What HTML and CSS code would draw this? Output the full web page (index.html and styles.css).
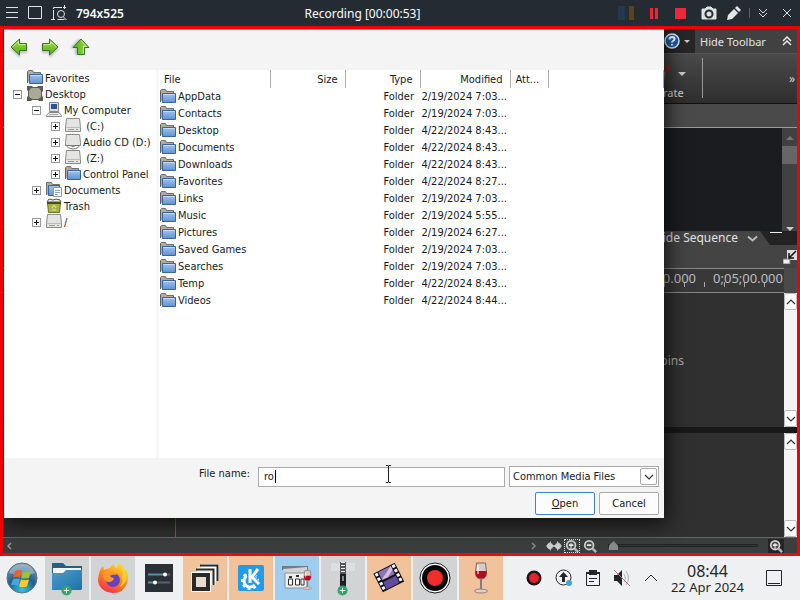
FILE: index.html
```
<!DOCTYPE html>
<html lang="en">
<head>
<meta charset="utf-8">
<title>Recording</title>
<link rel="stylesheet" href="styles.css">
</head>
<body>
<svg class="defs" aria-hidden="true">
  <defs>
    <linearGradient id="blue" x1="0" y1="0" x2="0" y2="1"><stop offset="0" stop-color="#a4c4ec"/><stop offset="1" stop-color="#5f92d2"/></linearGradient>
    <linearGradient id="green" x1="0" y1="0" x2="0" y2="1"><stop offset="0" stop-color="#a6de4c"/><stop offset="1" stop-color="#4fae14"/></linearGradient>
    <linearGradient id="teal" x1="0" y1="0" x2="1" y2="1"><stop offset="0" stop-color="#4f9dca"/><stop offset="1" stop-color="#1c72a8"/></linearGradient>
    <radialGradient id="orb" cx=".5" cy=".9" r=".9"><stop offset="0" stop-color="#35c0e8"/><stop offset=".5" stop-color="#20608e"/><stop offset="1" stop-color="#7d98ae"/></radialGradient>
    <linearGradient id="fire" x1=".8" y1="0" x2=".3" y2="1"><stop offset="0" stop-color="#ffe030"/><stop offset=".5" stop-color="#ff8a1c"/><stop offset="1" stop-color="#f0304c"/></linearGradient>
  </defs>
  <symbol id="folder" viewBox="0 0 16 16"><path d="M.5 12.500V1.500l1-1h4l1 2h7V5" fill="#b3ac9c" stroke="#6d6f70"/><path d="M.5 13V2" stroke="#595f68"/><path d="M2.500 4.500h13v9h-13z" fill="url(#blue)" stroke="#37639f"/><path d="M3.500 5.500h11" stroke="#c6dcf6"/></symbol>
  <symbol id="drive" viewBox="0 0 16 16"><path d="M1.500.5h13l1 9v4H.5v-4z" fill="#e4e4e2" stroke="#8b8b89"/><path d="M1 9.500h14" stroke="#bbb"/><path d="M3 11.500h6M11 11.500h2" stroke="#999"/></symbol>
  <symbol id="disc" viewBox="0 0 16 16"><path d="M1.500.5h13l1 8v3H.5v-3z" fill="#e4e4e2" stroke="#8b8b89"/><path d="M1.500 11.500h13q-1 3-6.500 3.500-5.500-.5-6.500-3.500z" fill="#fff" stroke="#777"/><path d="M6 11.500q2 3 4 0" fill="#aaa" stroke="#777"/></symbol>
  <symbol id="desk" viewBox="0 0 16 16"><path d="M0 0h5l1 1h4l1-1h5v5l-1 1v4l1 1v4h-4l-1-1H5l-1 1H0v-4l1-1V5L0 4z" fill="#5a5a57"/><path d="M4 2h8l2 3v6l-3 2H5l-3-2V5z" fill="#a9aa94"/></symbol>
  <symbol id="pc" viewBox="0 0 16 16"><path d="M3.500.5h9v9h-9z" fill="#ddd" stroke="#888"/><path d="M5 2h6v5H5z" fill="#29549a"/><path d="M3 10.500h10l2.500 3v1H.5v-1z" fill="#ececec" stroke="#888"/><path d="M3 12.500h9" stroke="#aaa"/></symbol>
  <symbol id="docs" viewBox="0 0 16 16"><path d="M.5 13V.5h5l1 2h7V6" fill="#b3ac9c" stroke="#6d6f70"/><path d="M2.500 3.500h11v10h-11z" fill="url(#blue)" stroke="#37639f"/><path d="M7.500 5.500h8v9h-8z" fill="#fff" stroke="#909ba8"/><path d="M9 8.500h5M9 10.500h5M9 12.500h3" stroke="#8aa3c0"/></symbol>
  <symbol id="trash" viewBox="0 0 16 16"><path d="M1.500 4.500h13l-1 10h-11z" fill="#a8b545" stroke="#68722b"/><path d="M1 4l2-3 4 1 3-1 4 1 1 2z" fill="#eee" stroke="#58583e"/><path d="M1 5h14" stroke="#474d22" stroke-width="2"/><path d="M6 10l2-3 2 3M6 12h4" fill="none" stroke="#e0e8a0"/></symbol>
  <symbol id="arrow" viewBox="0 0 18 18"><path d="M1 9l8.500-8v4.500h7v7h-7V17z" fill="url(#green)" stroke="#38702a"/><path d="M2.500 9l6-5.500v3h7" fill="none" stroke="#c8f08c"/></symbol>
  <symbol id="glass" viewBox="0 0 16 16"><circle cx="7" cy="7" r="5" fill="#4a4c4b" stroke="#d2d2d2" stroke-width="2"/><path d="M11 11l4 4" stroke="#b5b5b5" stroke-width="3"/><path d="M4.500 7h5" stroke="#eee" stroke-width="2"/></symbol>
  <symbol id="down" viewBox="0 0 10 6"><path d="M1 1l4 4 4-4" fill="none" stroke="#333" stroke-width="1.200"/></symbol>
  <symbol id="plus" viewBox="0 0 12 12"><circle cx="6" cy="6" r="5.500" fill="#2fa56b"/><path d="M3 6h6M6 3v6" stroke="#fff"/></symbol>
  <symbol id="wine" viewBox="0 0 16 32"><path d="M3.500 1h9l1 9c0 5-2 7-5.500 7s-5.500-2-5.500-7z" fill="#dccbc4" stroke="#806760"/><path d="M2.500 9h11c.5 6-2 7.500-5.500 7.500S2 15 2.500 9z" fill="#a80f20"/><path d="M8 17v11" stroke="#8c7a78" stroke-width="2"/><ellipse cx="8" cy="29" rx="6.500" ry="2" fill="#ded0c8" stroke="#96807a"/><path d="M5 3v9" stroke="#fff"/></symbol>
</svg>

<header class="recbar">
  <div class="rec-left">
    <button aria-label="Menu"><svg width="14" height="14" viewBox="0 0 14 14"><path d="M1 1.500h12M1 6.500h12M1 11.500h12"/></svg></button>
    <button aria-label="Region"><svg width="14" height="14" viewBox="0 0 14 14"><path d="M.5.5h13v12H.5z"/></svg></button>
    <button aria-label="Select area"><svg width="16" height="16" viewBox="0 0 16 16"><path d="M2.500 15V2.500H15M0 14.500h4M13.500 0v4" stroke-dasharray="10 1"/><circle cx="10" cy="9" r="3.500"/><path d="M12.500 12l3 3M6.500 14.500h7"/></svg></button>
    <strong>794x525</strong>
  </div>
  <div class="rec-title">Recording [00:00:53]</div>
  <div class="rec-right">
    <svg width="18" height="16" viewBox="0 0 18 16"><path d="M1 1h7v14H1z" fill="#1c3a52"/><path d="M5 1h2v14H5z" fill="#2b3a40"/><path d="M9 1h2v14H9z" fill="#2d2c2b"/><path d="M12 1h5v14h-5z" fill="#56431f"/></svg>
    <button aria-label="Pause"><svg width="12" height="12"><path d="M2.500 1v11M7.500 1v11" stroke="#ec2733" stroke-width="3"/></svg></button>
    <button aria-label="Stop"><svg width="12" height="12"><path d="M0 1h11v11H0z" fill="#ed2939" stroke="none"/></svg></button>
    <div class="shots">
      <button aria-label="Screenshot"><svg width="16" height="14" viewBox="0 0 16 14"><path d="M1 3h3l2-2h4l2 2h3v10H1z" fill="#dfe2e4" stroke="#dfe2e4"/><circle cx="8" cy="8" r="3.500" fill="#dfe2e4" stroke="#252b33" stroke-width="2"/></svg></button>
      <button aria-label="Draw"><svg width="14" height="14" viewBox="0 0 14 14"><path d="M0 14l1-5 6-6 4 4-6 6zM8 2l2-2 4 4-2 2z" fill="#e4e6e8" stroke="none"/></svg></button>
    </div>
    <i class="sep"></i>
    <button aria-label="Collapse"><svg width="10" height="12" viewBox="0 0 10 12"><path d="M1 2l4 4 4-4M1 6l4 4 4-4"/></svg></button>
    <button aria-label="Close"><svg width="10" height="10" viewBox="0 0 10 10"><path d="M1 1l8 8M9 1L1 9"/></svg></button>
  </div>
</header>

<main class="capture">
  <section class="editor" aria-label="Editor">
    <div class="menu">
      <svg width="16" height="16" viewBox="0 0 16 16"><circle cx="8" cy="8" r="7" fill="#1c61ac" stroke="#dce8f4" stroke-width="1.500"/><path d="M5.500 6.500q0-2.500 2.500-2.500t2.500 2q0 1-1.500 2-1 .6-1 1.500M8 11v1.500" fill="none" stroke="#fff" stroke-width="2"/></svg>
      <i class="tri small"></i>
      <button class="hide">Hide Toolbar <svg width="10" height="12" viewBox="0 0 10 12"><path d="M1 6l4-4 4 4M1 10l4-4 4 4" fill="none" stroke="#eee" stroke-width="1.500"/></svg></button>
    </div>
    <div class="tools">
      <div class="generate">
        <div class="gen-icon"><svg width="8" height="18" viewBox="0 0 8 18"><path d="M2 0h5v6H4z" fill="#96251f"/><path d="M0 6l3 1-2 9H0z" fill="#686868"/></svg><i class="tri"></i></div>
        <span>rate</span>
      </div>
      <span class="more">»</span>
    </div>
    <div class="band"></div>
    <div class="preview"><div class="oldscroll"><i class="tri up"></i><b></b><i class="tri"></i></div></div>
    <div class="tabs"><div class="tab">ide Sequence <svg width="11" height="7" viewBox="0 0 11 7"><path d="M1 1.500l4.500 4 4.500-4" fill="none" stroke="#bbb" stroke-width="2"/></svg></div><i class="tabline"></i></div>
    <div class="tabfoot"><svg width="14" height="14" viewBox="0 0 14 14"><path d="M4 0h10v10H4z" fill="#ddd"/><path d="M0 9h7v5H0z" fill="#eee" stroke="#777"/><path d="M13 1L6 8M6 3v5h5" fill="none" stroke="#111" stroke-width="1.500"/></svg></div>
    <div class="ruler"><div class="marks"><span>0.000</span><span>0;05;00.000</span></div></div>
    <div class="tracks first">
      <div class="lane">pins</div>
      <div class="scroll"><button aria-label="Scroll up"><svg class="flip" width="10" height="6"><use href="#down"/></svg></button><button aria-label="Scroll down"><svg width="10" height="6"><use href="#down"/></svg></button></div>
    </div>
    <div class="tracks second">
      <div class="lane playline"></div>
      <div class="scroll"><button aria-label="Scroll up"><svg class="flip" width="10" height="6"><use href="#down"/></svg></button><button aria-label="Scroll down"><svg width="10" height="6"><use href="#down"/></svg></button></div>
    </div>
    <div class="zoombar">
      <svg width="6" height="8" viewBox="0 0 6 8"><path d="M5 1L2 4l3 3" fill="none" stroke="#999" stroke-width="1.500"/></svg>
      <svg class="end" width="6" height="8" viewBox="0 0 6 8"><path d="M1 1l3 3-3 3" fill="none" stroke="#888" stroke-width="1.500"/></svg>
      <svg width="16" height="14" viewBox="0 0 16 14"><path d="M0 7l5-5v4h6V2l5 5-5 5V8H5v4z" fill="#bbb"/><circle cx="4" cy="7" r="3" fill="#ccc"/><circle cx="12" cy="7" r="3" fill="#ccc"/></svg>
      <svg class="dotted" width="16" height="14"><use href="#glass"/><path d="M7 4v6" stroke="#eee"/></svg>
      <svg width="16" height="14"><use href="#glass"/></svg>
      <input type="range" min="0" max="100" value="0" aria-label="Timeline zoom">
      <svg class="box" width="16" height="14"><use href="#glass"/><path d="M7 4v6" stroke="#eee"/></svg>
    </div>
  </section>

  <section class="dialog" role="dialog" aria-label="Open">
    <nav class="nav">
      <button aria-label="Back"><svg width="18" height="18"><use href="#arrow"/></svg></button>
      <button aria-label="Forward"><svg class="right" width="18" height="18"><use href="#arrow"/></svg></button>
      <button aria-label="Up"><svg class="top" width="18" height="18"><use href="#arrow"/></svg></button>
    </nav>
    <div class="panes">
      <ul class="tree">
        <li><i class="tog none"></i><svg width="16" height="16"><use href="#folder"/></svg>Favorites</li>
        <li><i class="tog minus"></i><svg width="16" height="16"><use href="#desk"/></svg>Desktop</li>
        <li class="l1"><i class="tog minus"></i><svg width="16" height="16"><use href="#pc"/></svg>My Computer</li>
        <li class="l2"><i class="tog"></i><svg width="16" height="16"><use href="#drive"/></svg>&nbsp;(C:)</li>
        <li class="l2"><i class="tog"></i><svg width="16" height="16"><use href="#disc"/></svg>Audio CD (D:)</li>
        <li class="l2"><i class="tog"></i><svg width="16" height="16"><use href="#drive"/></svg>&nbsp;(Z:)</li>
        <li class="l2"><i class="tog"></i><svg width="16" height="16"><use href="#folder"/></svg>Control Panel</li>
        <li class="l1"><i class="tog"></i><svg width="16" height="16"><use href="#docs"/></svg>Documents</li>
        <li class="l1"><i class="tog none"></i><svg width="16" height="16"><use href="#trash"/></svg>Trash</li>
        <li class="l1"><i class="tog"></i><svg width="16" height="16"><use href="#drive"/></svg>/</li>
      </ul>
      <div class="files">
        <table>
          <colgroup><col class="c-file"><col class="c-size"><col class="c-type"><col class="c-mod"><col class="c-att"><col></colgroup>
          <thead><tr><th class="start">File</th><th>Size</th><th>Type</th><th>Modified</th><th class="start">Att...</th><th></th></tr></thead>
          <tbody>
            <tr><td><svg width="16" height="16"><use href="#folder"/></svg>AppData</td><td></td><td>Folder</td><td>2/19/2024 7:03...</td><td></td><td></td></tr>
            <tr><td><svg width="16" height="16"><use href="#folder"/></svg>Contacts</td><td></td><td>Folder</td><td>2/19/2024 7:03...</td><td></td><td></td></tr>
            <tr><td><svg width="16" height="16"><use href="#folder"/></svg>Desktop</td><td></td><td>Folder</td><td>4/22/2024 8:43...</td><td></td><td></td></tr>
            <tr><td><svg width="16" height="16"><use href="#folder"/></svg>Documents</td><td></td><td>Folder</td><td>4/22/2024 8:43...</td><td></td><td></td></tr>
            <tr><td><svg width="16" height="16"><use href="#folder"/></svg>Downloads</td><td></td><td>Folder</td><td>4/22/2024 8:43...</td><td></td><td></td></tr>
            <tr><td><svg width="16" height="16"><use href="#folder"/></svg>Favorites</td><td></td><td>Folder</td><td>4/22/2024 8:27...</td><td></td><td></td></tr>
            <tr><td><svg width="16" height="16"><use href="#folder"/></svg>Links</td><td></td><td>Folder</td><td>2/19/2024 7:03...</td><td></td><td></td></tr>
            <tr><td><svg width="16" height="16"><use href="#folder"/></svg>Music</td><td></td><td>Folder</td><td>2/19/2024 5:55...</td><td></td><td></td></tr>
            <tr><td><svg width="16" height="16"><use href="#folder"/></svg>Pictures</td><td></td><td>Folder</td><td>2/19/2024 6:27...</td><td></td><td></td></tr>
            <tr><td><svg width="16" height="16"><use href="#folder"/></svg>Saved Games</td><td></td><td>Folder</td><td>2/19/2024 7:03...</td><td></td><td></td></tr>
            <tr><td><svg width="16" height="16"><use href="#folder"/></svg>Searches</td><td></td><td>Folder</td><td>2/19/2024 7:03...</td><td></td><td></td></tr>
            <tr><td><svg width="16" height="16"><use href="#folder"/></svg>Temp</td><td></td><td>Folder</td><td>4/22/2024 8:43...</td><td></td><td></td></tr>
            <tr><td><svg width="16" height="16"><use href="#folder"/></svg>Videos</td><td></td><td>Folder</td><td>4/22/2024 8:44...</td><td></td><td></td></tr>
          </tbody>
        </table>
      </div>
    </div>
    <form class="foot">
      <div class="line">
        <label for="fname">File name:</label>
        <div class="field"><input id="fname" type="text" value="ro"><i class="caret"></i></div>
        <div class="combo"><select aria-label="File type"><option>Common Media Files</option></select><span><svg width="10" height="6"><use href="#down"/></svg></span></div>
      </div>
      <div class="line buttons"><button type="button" class="default"><u>O</u>pen</button><button type="button">Cancel</button></div>
    </form>
  </section>
  <svg class="pointer" width="7" height="18" viewBox="0 0 7 18"><path d="M1 .5h2l.5.5.5-.5h2M3.500 1v16M1 17.500h2l.5-.5.5.5h2" fill="none" stroke="#222"/></svg>
</main>

<footer class="taskbar">
  <div class="apps">
    <button class="start-menu" aria-label="Start"><svg width="32" height="32" viewBox="0 0 32 32"><circle cx="16" cy="16" r="15" fill="url(#orb)" stroke="#5a7386"/><path d="M3 11Q7 2 16 2t13 9q-12 5-26 0z" fill="#fff" opacity=".3"/><path d="M9 9q4-2 7 0l-2 7q-3-2-7 0z" fill="#e8622c"/><path d="M17 10q4 1 8-1l-2 7q-4 1-8 0z" fill="#9bc33c"/><path d="M7 17q4-1 7 0l-2 7q-3-2-7-1z" fill="#44a8e0"/><path d="M15 17.500q4 1 8 0l-2 7q-4 1-8 0z" fill="#fcc82e"/></svg></button>
    <button class="gray" aria-label="Files"><svg width="32" height="36" viewBox="0 0 32 36"><path d="M1 3h11l3 3h16v23H1z" fill="#23607e"/><path d="M2 8h28v5H2z" fill="#f2f4f5"/><path d="M1 13h11l3-3h16v19l-1 1H1z" fill="url(#teal)"/><svg x="10" y="25" width="11" height="11"><use href="#plus"/></svg></svg></button>
    <button class="gray" aria-label="Firefox"><svg width="32" height="32" viewBox="0 0 32 32"><path d="M2 12q1-5 4-8l1 4q3-2 6-2 1-3 4-4 0 3 3 4 1-3 2-5 6 4 5 9 2-1 2-2 3 6 1 13-3 10-14 10Q3 30 1 19q0-4 1-7z" fill="url(#fire)"/><circle cx="16" cy="18" r="7" fill="#6840c2"/><path d="M6 11q6-4 11-1 3 2 2 3-4-1-6 1 1 2 4 2-1 4-5 4-4 0-5-4-2-2-1-5z" fill="#ff9827"/><path d="M22 3q5 5 3 12 2 6-3 10 7-2 8-11-1-8-8-11z" fill="#ffd02c"/></svg></button>
    <button aria-label="Settings"><svg width="28" height="28" viewBox="0 0 28 28"><path d="M0 0h28v28H0z" fill="#2b3036"/><path d="M3 10.500h17" stroke="#5592a6" stroke-width="2"/><path d="M20 10.500h5M8 18.500h17" stroke="#5b6266" stroke-width="2"/><path d="M3 18.500h6" stroke="#5592a6" stroke-width="2"/><circle cx="20" cy="10.500" r="2" fill="#fff"/><circle cx="10" cy="18.500" r="2" fill="#fff"/></svg></button>
    <button class="peach" aria-label="Windows"><svg width="28" height="28" viewBox="0 0 28 28" fill="none" stroke="#2b2828"><path d="M10 1.500h16.500V17M6 5.500h16.500V21" stroke="#fff" stroke-width="4"/><path d="M9 1.500h17.500V17M5 5.500h17.500V21" stroke-width="2"/><path d="M0 8h20v20H0z" fill="#fff" stroke="none"/><path d="M3 11h14v14H3z" fill="#eadbd0" stroke-width="4"/></svg></button>
    <button class="peach" aria-label="KDE"><svg width="28" height="28" viewBox="0 0 28 28"><rect x="1" y="1" width="26" height="26" rx="2" fill="#239be9"/><circle cx="13" cy="17" r="6" fill="none" stroke="#fff" stroke-width="3"/><circle cx="13" cy="17" r="8" fill="none" stroke="#fff" stroke-width="2" stroke-dasharray="3 3"/><path d="M13 5v14M21 5l-7 8 7 7" fill="none" stroke="#239be9" stroke-width="6"/><path d="M13 5v14M21 5l-6 8 7 7" fill="none" stroke="#fff" stroke-width="3"/></svg></button>
    <button class="sky" aria-label="Wine program"><svg width="32" height="28" viewBox="0 0 32 28"><path d="M1 2h26v4H1z" fill="#777a80"/><path d="M2 5l2 4h22V3z" fill="#cfd3d6"/><path d="M4 9h22v15H4z" fill="#eee" stroke="#8c9096"/><path d="M7.500 15h4v6h-4zM14.500 15h4v6h-4zM20 15h3v6h-3z" fill="#fff" stroke="#333"/><path d="M8 13h3M15 12h3" stroke="#333" stroke-width="2"/><svg x="21" y="6" width="11" height="20"><use href="#wine"/></svg></svg></button>
    <button class="gray" aria-label="Archive"><svg width="24" height="36" viewBox="0 0 24 36"><path d="M0 3h9v8H0zM15 3h9v8h-9z" fill="#dcdedf"/><path d="M9 2h6v26H9z" fill="#54585c"/><path d="M12 2v15" stroke="#eee" stroke-width="4" stroke-dasharray="1 2"/><path d="M9 14h6v12H9z" fill="#1c1f22"/><path d="M11 16h2v5h-2z" fill="#888"/><svg x="6" y="25" width="11" height="11"><use href="#plus"/></svg></svg></button>
    <button class="peach" aria-label="Video editor"><svg width="32" height="32" viewBox="0 0 32 32"><g transform="rotate(-27 16 16)"><path d="M4 5h24v21H4z" fill="#151018"/><path d="M9 6h14v9H9z" fill="#8878b6"/><path d="M9 17h14v8H9z" fill="#634b9b"/><path d="M9 14l14-8v4l-8 5z" fill="#dcb9d9"/><path d="M6.500 6v19M25.500 6v19" stroke="#fff" stroke-width="3" stroke-dasharray="3 2"/></g></svg></button>
    <button class="gray" aria-label="Recorder"><svg width="32" height="32" viewBox="0 0 32 32"><circle cx="16" cy="16" r="15" fill="#fff" stroke="#1c1c1c"/><circle cx="16" cy="16" r="13" fill="#060606"/><circle cx="16" cy="16" r="8" fill="#f42c2c"/></svg></button>
    <button class="peach" aria-label="Wine"><svg width="16" height="32"><use href="#wine"/></svg></button>
  </div>
  <div class="tray">
    <svg width="16" height="16" viewBox="0 0 16 16"><circle cx="8" cy="8" r="7.500" fill="#1a1414"/><circle cx="8" cy="8" r="5" fill="#e3242e"/></svg>
    <svg width="18" height="18" viewBox="0 0 18 18"><circle cx="8.500" cy="8.500" r="7.500" fill="none" stroke="#232629"/><path d="M8.500 3l4.500 5h-3v5H7V8H4z" fill="#232629"/><circle cx="14" cy="14" r="3" fill="#3da4e6"/></svg>
    <svg width="14" height="16" viewBox="0 0 14 16"><path d="M.5 2.500h13v13H.5z" fill="none" stroke="#232629"/><path d="M3 0h8v5H3zM0 2h14v2H0z" fill="#232629"/><path d="M3 8.500h8M3 11.500h5" stroke="#232629"/></svg>
    <svg width="18" height="18" viewBox="0 0 18 18"><path d="M1 6h3l5-5v16l-5-5H1z" fill="#232629"/><path d="M11 5q3 4 0 8M13 2q5 7 0 14" fill="none" stroke="#b2b3b4"/><path d="M1 1l16 16" stroke="#c2707a"/></svg>
    <svg width="14" height="8" viewBox="0 0 14 8"><path d="M1 7l6-6 6 6" fill="none" stroke="#232629"/></svg>
  </div>
  <div class="clock"><time>08:44</time><span>22 Apr 2024</span></div>
  <button class="show" aria-label="Show desktop"><svg width="16" height="16" viewBox="0 0 16 16"><path d="M.5.5h15v15H.5zM2 13.500h12" fill="none" stroke="#232629"/></svg></button>
</footer>
</body>
</html>
```
FILE: styles.css
```
* { box-sizing: border-box; }
html, body { height: 100%; }
body {
  margin: 0;
  display: grid;
  grid-template-rows: 26px minmax(0, 1fr) 44px;
  font-family: "Noto Sans", sans-serif;
  font-size: 12px;
  overflow: hidden;
}
button, input, select { font: inherit; color: inherit; margin: 0; }
button { padding: 0; border: 0; background: none; display: flex; align-items: center; justify-content: center; }
svg { display: block; flex: none; }
.defs { position: absolute; width: 0; height: 0; }

/* recorder bar */
.recbar {
  display: flex;
  align-items: center;
  background: #252b33;
  color: #fcfcfc;
  padding: 0 8px 0 5px;
}
.rec-title { flex: 1; text-align: center; padding-right: 16px; }
.rec-left, .rec-right, .shots { display: flex; align-items: center; }
.rec-left { gap: 9px; }
.rec-left svg, .rec-right button svg { fill: none; stroke: #dfe2e4; }
.rec-left strong { font-weight: 600; }
.rec-right { gap: 14px; }
.shots { gap: 10px; }
.sep { width: 1px; height: 10px; background: #596068; margin: 0 -6px; }

/* captured region */
.capture {
  position: relative;
  display: grid;
  border: 3px solid #f00000;
  border-bottom-color: #dc1212;
  background: #303030;
  overflow: hidden;
}
.editor {
  display: grid;
  grid-template-rows: 24px 51px 24px minmax(0, 103fr) 14px 23px 25px minmax(0, 134fr) minmax(0, 110fr) 16px;
  color: #d2d2d2;
}
.menu { display: flex; justify-content: flex-end; align-items: center; background: #262626; }
.tri { border: 4px solid transparent; border-top-color: #ccc; border-bottom: 0; }
.tri.up { border: 4px solid transparent; border-bottom-color: #777; border-top: 0; }
.tri.small { border-width: 3px 3px 0; margin: 0 5px 0 4px; }
.hide { width: 102px; height: 100%; background: #414141; gap: 16px; font-size: 11px; color: #e4e4e4; white-space: nowrap; }
.tools {
  display: flex;
  justify-content: flex-end;
  background: linear-gradient(#4a4a4a, #2e2e2e);
  border-bottom: 1px solid #111;
  border-top: 1px solid #555;
  padding-right: 2px;
}
.generate { display: flex; flex-direction: column; gap: 2px; padding: 7px 16px 0 0; margin: 4px 0 5px; border-right: 1px solid #999; font-size: 11px; }
.gen-icon { display: flex; align-items: center; gap: 7px; }
.more { width: 92px; text-align: right; align-self: center; }
.band { background: #4a4a4a; border-bottom: 1px solid #999; }
.preview { display: flex; justify-content: flex-end; background: #1b1c20; }
.oldscroll { width: 15px; background: #404241; display: flex; flex-direction: column; align-items: center; padding-top: 8px; }
.oldscroll b { width: 100%; height: 18px; background: #666; margin: 6px 0 auto; }
.tabs { display: flex; justify-content: flex-end; background: #232323; padding-right: 15px; }
.tab { display: flex; align-items: center; gap: 9px; padding-right: 12px; background: #444; clip-path: polygon(0 0, calc(100% - 10px) 0, 100% 100%, 0 100%); line-height: 14px; color: #e2e2e2; flex: 1; justify-content: flex-end; }
.tabline { width: 12px; border-top: 1px solid #eee; margin-top: 1px; }
.tabfoot { display: flex; justify-content: flex-end; align-items: center; background: #444; }
.ruler { background: #4a4a4a; padding-right: 13px; }
.marks {
  height: 100%;
  display: flex;
  justify-content: flex-end;
  gap: 17px;
  padding-right: 1px;
  color: #bdbdbd;
  background: #383838 repeating-linear-gradient(to left, transparent 0 19px, #aaa 19px 20px) right 13px / 120px 5px no-repeat;
  border-top: 1px solid #888;
  border-bottom: 1px solid #888;
  font-size: 13px;
  line-height: 18px;
}
.tracks { display: flex; background: #303030; }
.lane { flex: 1; display: flex; align-items: center; justify-content: flex-end; padding-right: 100px; color: #aaa; }
.second { border-top: 6px solid #181818; }
.playline { background: linear-gradient(#f02438, #f02438) 172px 0 / 1px 100% no-repeat; }
.scroll { width: 13px; background: #f4f4f4; display: flex; flex-direction: column; justify-content: space-between; }
.scroll button { height: 17px; border: 1px solid #bbb; border-radius: 2px; background: #fcfcfc; }
.flip { transform: rotate(180deg); }
.zoombar { display: flex; align-items: center; gap: 2px; padding: 0 13px 0 3px; background: #3c3e3d; border-top: 1px solid #666; }
.zoombar .end { margin-left: auto; margin-right: 7px; }
.dotted { outline: 1px dotted #ddd; outline-offset: -1px; }
.box { background: #242424; }
.zoombar input { appearance: none; width: 150px; height: 3px; margin: 0 8px 0 8px; background: #303535; border: 1px solid #202424; }
.zoombar input::-webkit-slider-thumb { appearance: none; width: 9px; height: 9px; background: #8b8b8b; clip-path: polygon(50% 0, 100% 50%, 100% 100%, 0 100%, 0 50%); }

/* file dialog, floating over the editor */
.dialog {
  position: absolute;
  inset: 0 133px 35px 1px;
  display: flex;
  flex-direction: column;
  background: #f4f4f4;
  border-top: 1px solid #999;
  box-shadow: 2px 4px 20px rgba(0, 0, 0, .8);
  font-family: "DejaVu Sans Condensed", "DejaVu Sans", sans-serif;
  font-size: 11px;
  color: #1a1a1a;
}
.nav { display: flex; align-items: flex-start; gap: 13px; padding: 8px 6px; height: 40px; }
.nav svg { filter: drop-shadow(0 2px 1px #bbb); }
.right { transform: scaleX(-1); }
.top { transform: rotate(90deg); }
.panes { flex: 1; min-height: 0; display: grid; grid-template-columns: 152px minmax(0, 1fr); gap: 3px; background: #f8f8f8; }
.tree, .files { background: #fff; }
.tree { list-style: none; margin: 0; padding: 0 0 0 8px; }
.tree li { display: flex; align-items: center; height: 16px; white-space: nowrap; }
.tree svg { margin-right: 2px; }
.tree .l1 { padding-left: 19px; }
.tree .l2 { padding-left: 38px; }
.tog { width: 9px; height: 9px; margin: 0 5px 0 1px; border: 1px solid #999; background: linear-gradient(#111, #111) center / 5px 1px no-repeat, linear-gradient(#111, #111) center / 1px 5px no-repeat; }
.tog.minus { background: linear-gradient(#111, #111) center / 5px 1px no-repeat; }
.tog.none { visibility: hidden; }
table { width: 100%; table-layout: fixed; border-collapse: collapse; }
.c-file { width: 111px; }
.c-size, .c-type { width: 75px; }
.c-mod { width: 90px; }
.c-att { width: 38px; }
th { height: 18px; padding: 0 7px 0 0; font-weight: 400; text-align: right; border-right: 1px solid #aaa; }
th.start { text-align: left; padding: 0 0 0 5px; }
td { height: 17px; padding: 0 3px 0 0; text-align: right; white-space: nowrap; }
td:nth-child(3) { padding-right: 6px; }
td:first-child { display: flex; align-items: center; gap: 2px; padding-left: 1px; }
.foot { padding: 8px 5px 3px; display: flex; flex-direction: column; gap: 5px; }
.line { display: flex; align-items: center; gap: 4px; }
.line label { width: 245px; text-align: right; padding: 0 4px 6px 0; }
.field { flex: 1; display: flex; align-items: center; height: 20px; background: #fff; border: 1px solid #aaa; padding-left: 5px; }
.field input { width: 11px; border: 0; padding: 0; outline: 0; background: none; flex: none; }
.caret { width: 1px; height: 13px; background: #000; }
.combo { width: 150px; height: 21px; display: flex; align-items: center; border: 1px solid #aaa; background: #fff; padding: 1px; }
.combo select { appearance: none; border: 0; background: none; flex: 1; min-width: 0; padding: 0 2px; }
.combo span { width: 17px; height: 17px; border: 1px solid #aaa; border-radius: 2px; display: grid; place-items: center; }
.buttons { justify-content: flex-end; }
.buttons button { width: 60px; height: 23px; border: 1px solid #aaa; border-radius: 2px; background: #fcfcfc; }
.buttons button.default { border-color: #3c87c7; display: block; }
.pointer { position: absolute; left: 382px; bottom: 70px; }

/* taskbar */
.taskbar { display: flex; align-items: center; background: #eff0f1; color: #232629; }
.apps { display: flex; height: 100%; gap: 2px; }
.apps button { width: 44px; }
.apps .start-menu { width: 43px; }
.gray { background: #d2d3d4; }
.peach { background: #f0c39c; }
.sky { background: #9fcdf0; }
.tray { display: flex; align-items: center; gap: 13px; margin: 0 13px 0 auto; }
.clock { display: flex; flex-direction: column; align-items: center; font-size: 13px; line-height: 14px; margin-right: 22px; white-space: nowrap; }
.clock time { font-size: 16px; line-height: 18px; }
.show { margin-right: 18px; }
```
